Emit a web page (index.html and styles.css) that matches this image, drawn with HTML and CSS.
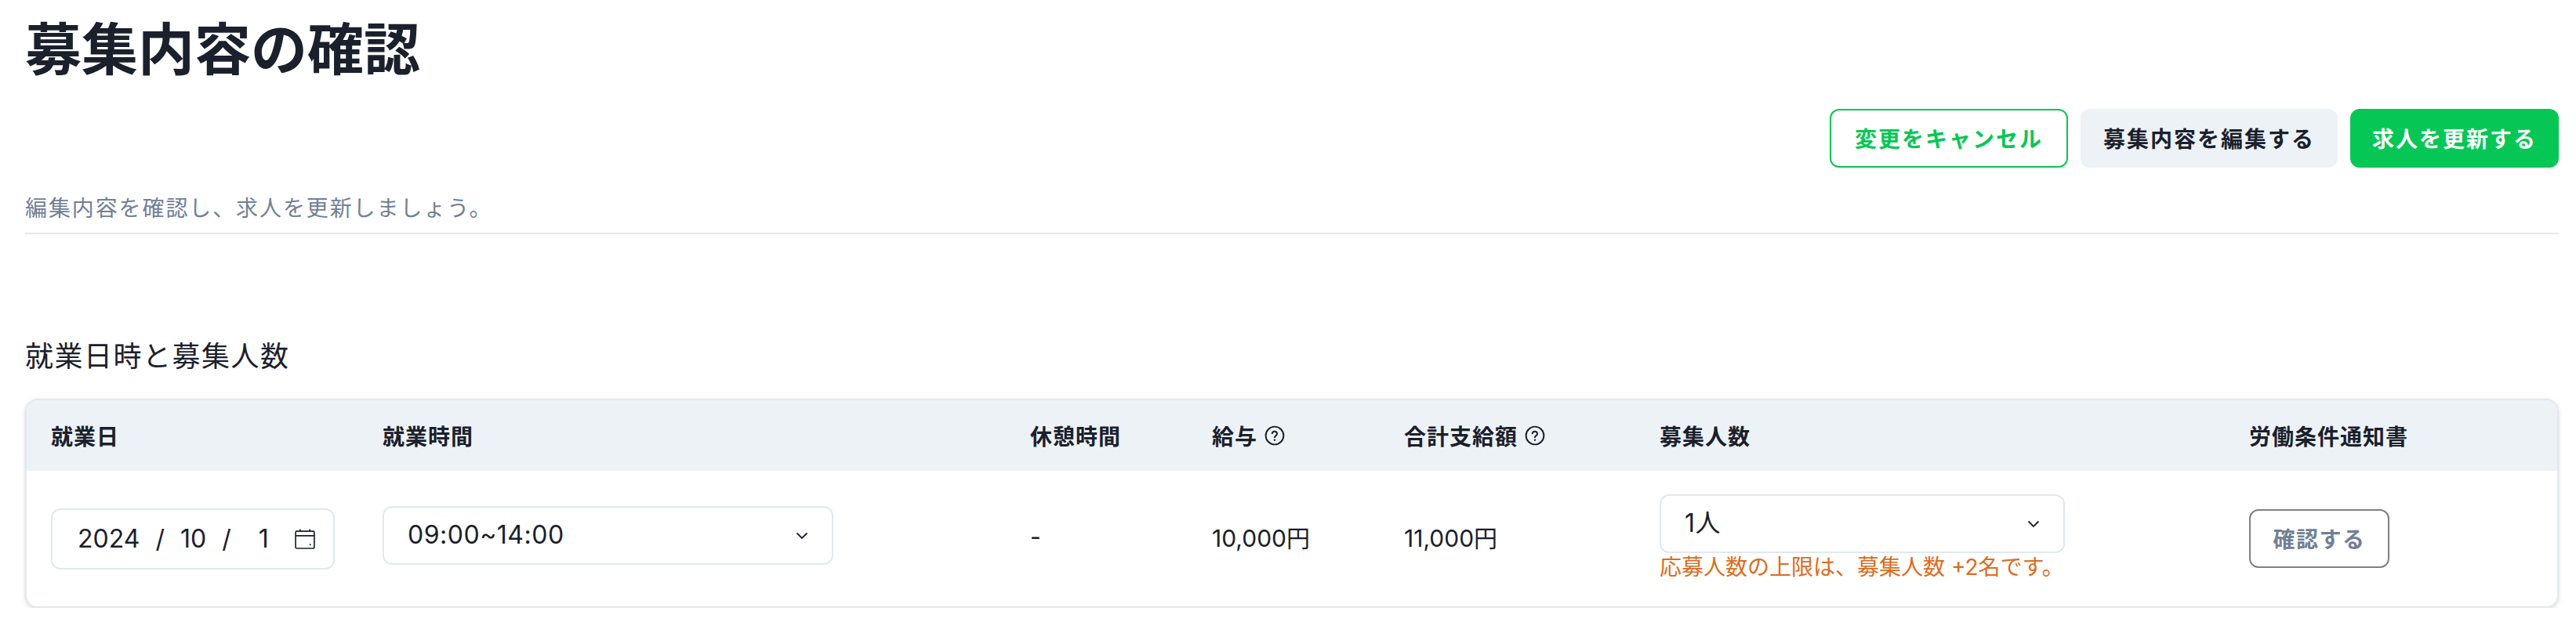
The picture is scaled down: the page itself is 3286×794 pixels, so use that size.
FILE: index.html
```html
<!DOCTYPE html>
<html lang="ja">
<head>
    <meta charset="UTF-8">
    <meta name="viewport" content="width=device-width, initial-scale=1.0">
    <title>募集内容の確認</title>
    <link rel="stylesheet" href="styles.css">
</head>
<body>
    <header class="page-header">
        <h1>募集内容の確認</h1>
        <div class="actions">
            <button class="btn btn-outline" type="button">変更をキャンセル</button>
            <button class="btn btn-gray" type="button">募集内容を編集する</button>
            <button class="btn btn-green" type="button">求人を更新する</button>
        </div>
        <p class="lead">編集内容を確認し、求人を更新しましょう。</p>
    </header>

    <section class="schedule">
        <h2>就業日時と募集人数</h2>
        <div class="card">
            <table>
                <colgroup>
                    <col class="col-date">
                    <col class="col-time">
                    <col class="col-break">
                    <col class="col-pay">
                    <col class="col-total">
                    <col class="col-count">
                    <col class="col-doc">
                </colgroup>
                <thead>
                    <tr>
                        <th>就業日</th>
                        <th>就業時間</th>
                        <th>休憩時間</th>
                        <th>
                            <span class="th-help">給与
                                <svg class="help-icon" viewBox="0 0 24 24" fill="none" stroke="currentColor" stroke-width="1.8">
                                    <circle cx="12" cy="12" r="10.5"/>
                                    <path d="M9 9.4a3 3 0 0 1 5.9.6c0 1.9-2.9 2.3-2.9 4" stroke-linecap="round"/>
                                    <circle cx="12" cy="17.2" r="1.1" fill="currentColor" stroke="none"/>
                                </svg>
                            </span>
                        </th>
                        <th>
                            <span class="th-help">合計支給額
                                <svg class="help-icon" viewBox="0 0 24 24" fill="none" stroke="currentColor" stroke-width="1.8">
                                    <circle cx="12" cy="12" r="10.5"/>
                                    <path d="M9 9.4a3 3 0 0 1 5.9.6c0 1.9-2.9 2.3-2.9 4" stroke-linecap="round"/>
                                    <circle cx="12" cy="17.2" r="1.1" fill="currentColor" stroke="none"/>
                                </svg>
                            </span>
                        </th>
                        <th>募集人数</th>
                        <th>労働条件通知書</th>
                    </tr>
                </thead>
                <tbody>
                    <tr>
                        <td>
                            <div class="date-field">
                                <span class="date-year">2024</span>
                                <span class="date-sep">/</span>
                                <span class="date-month">10</span>
                                <span class="date-sep">/</span>
                                <span class="date-day">1</span>
                                <svg class="calendar-icon" viewBox="0 0 25 25" fill="none" stroke="currentColor" stroke-width="1.6">
                                    <rect x="1" y="3" width="23" height="21" rx="1.5"/>
                                    <path d="M1 8.5h23M6.5 0.5v3M18.500 0.500v3"/>
                                    <circle cx="19" cy="19.500" r="1" fill="currentColor" stroke="none"/>
                                </svg>
                            </div>
                        </td>
                        <td>
                            <div class="select-wrap select-time">
                                <select>
                                    <option>09:00~14:00</option>
                                </select>
                                <svg class="chevron" viewBox="0 0 16 10" fill="none" stroke="currentColor" stroke-width="1.8">
                                    <path d="M1.500 1.500 8 8l6.500-6.500"/>
                                </svg>
                            </div>
                        </td>
                        <td class="cell-value">-</td>
                        <td class="cell-value">10,000円</td>
                        <td class="cell-value">11,000円</td>
                        <td>
                            <div class="select-wrap select-count">
                                <select>
                                    <option>1人</option>
                                </select>
                                <svg class="chevron" viewBox="0 0 16 10" fill="none" stroke="currentColor" stroke-width="1.8">
                                    <path d="M1.500 1.500 8 8l6.500-6.500"/>
                                </svg>
                            </div>
                            <p class="limit-note">応募人数の上限は、募集人数 +2名です。</p>
                        </td>
                        <td><button class="btn-check" type="button">確認する</button></td>
                    </tr>
                </tbody>
            </table>
        </div>
    </section>
</body>
</html>
```

FILE: styles.css
```css
* {
    box-sizing: border-box;
}
body {
    font-family: 'Inter', 'Noto Sans CJK JP', sans-serif;
    background-color: #fff;
    color: #1a202c;
    margin: 0;
    padding: 20px 22px 0 32px;
}
h1 {
    margin: 0;
    font-size: 72px;
    line-height: 86px;
    font-weight: 700;
}
.actions {
    display: flex;
    justify-content: flex-end;
    gap: 16px;
    margin-top: 33px;
}
.btn {
    height: 75px;
    padding: 0 30px 2px;
    border: 0;
    border-radius: 12px;
    font-family: inherit;
    font-size: 28px;
    font-weight: 700;
    letter-spacing: 2px;
    cursor: pointer;
}
.btn-outline {
    background-color: #fff;
    border: 2px solid #06c755;
    color: #06c755;
}
.btn-gray {
    padding: 0 29px 2px;
    background-color: #edf2f7;
    color: #1a202c;
}
.btn-green {
    padding: 0 28px 2px;
    background-color: #06c755;
    color: #fff;
}
.lead {
    margin: 28px 0 0;
    padding-bottom: 7px;
    border-bottom: 2px solid #e2e8f0;
    font-size: 28px;
    line-height: 48px;
    letter-spacing: 1.9px;
    color: #718096;
}
.schedule {
    margin-top: 130px;
}
h2 {
    margin: 0 0 28px;
    font-size: 36px;
    line-height: 52px;
    font-weight: 400;
    letter-spacing: 1.5px;
}
.card {
    border: 2px solid #e2e8f0;
    border-radius: 16px;
    overflow: hidden;
    box-shadow: 0 2px 6px rgba(0, 0, 0, 0.1), 0 2px 4px rgba(0, 0, 0, 0.06);
}
table {
    width: 100%;
    table-layout: fixed;
    border-collapse: collapse;
    font-size: 28px;
}
.col-date { width: 423px; }
.col-time { width: 826px; }
.col-break { width: 232px; }
.col-pay { width: 245px; }
.col-total { width: 326px; }
.col-count { width: 752px; }
th {
    height: 90px;
    padding: 0 0 0 31px;
    background-color: #edf2f7;
    text-align: left;
    font-weight: 700;
    letter-spacing: 1px;
}
td {
    height: 173px;
    padding: 0 0 0 31px;
    vertical-align: middle;
}
.cell-value {
    padding-bottom: 6px;
    font-size: 30px;
}
.th-help {
    display: inline-flex;
    align-items: center;
    gap: 9px;
}
.help-icon {
    width: 26px;
    height: 26px;
}
.date-field {
    display: flex;
    align-items: center;
    width: 362px;
    height: 78px;
    padding-left: 32px;
    border: 2px solid #e2e8f0;
    border-radius: 12px;
    font-size: 32px;
}
.date-sep {
    margin: 0 20px;
}
.date-day {
    margin-left: 15px;
}
.calendar-icon {
    width: 26px;
    height: 26px;
    margin-left: 33px;
}
.select-wrap {
    position: relative;
    color: #1a202c;
}
.select-time {
    width: 575px;
    margin-bottom: 8px;
}
.select-count {
    width: 517px;
}
select {
    display: block;
    width: 100%;
    height: 75px;
    padding: 0 30px 2px;
    border: 2px solid #e2e8f0;
    border-radius: 12px;
    background-color: #fff;
    color: inherit;
    font-family: inherit;
    font-size: 32px;
    letter-spacing: 0.5px;
    appearance: none;
}
.chevron {
    position: absolute;
    right: 32px;
    top: 33px;
    width: 16px;
    height: 10px;
}
.limit-note {
    margin: 1px 0 0;
    padding-bottom: 3px;
    font-size: 28px;
    line-height: 34px;
    color: #dd6b20;
}
.btn-check {
    height: 75px;
    width: 179px;
    padding: 0 0 2px;
    border: 2px solid #808080;
    border-radius: 12px;
    background-color: #fff;
    color: #718096;
    font-family: inherit;
    font-size: 28px;
    font-weight: 700;
    letter-spacing: 1.5px;
    cursor: pointer;
}
```
